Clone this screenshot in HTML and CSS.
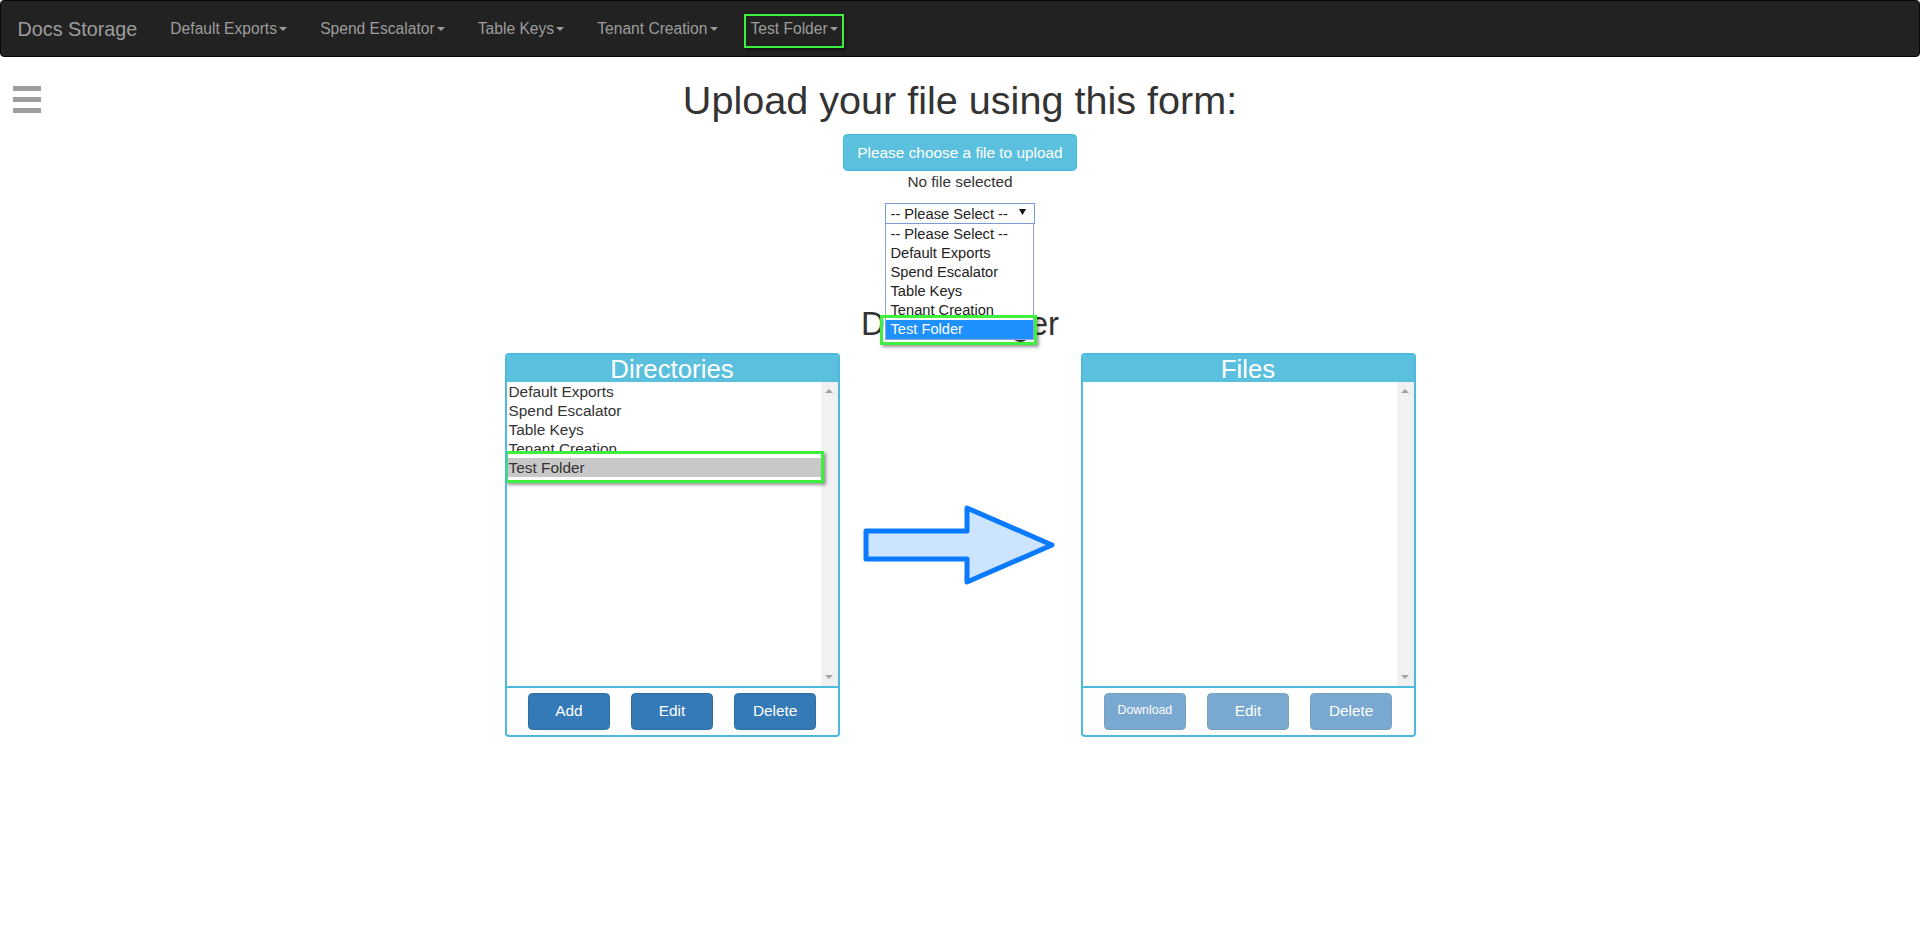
FILE: index.html
```html
<!DOCTYPE html>
<html lang="en">
<head>
<meta charset="utf-8">
<title>Docs Storage</title>
<link rel="stylesheet" href="styles.css">
</head>
<body>
<nav class="navbar">
  <a class="brand" href="#">Docs Storage</a>
  <ul class="nav">
    <li><a href="#">Default Exports<span class="caret"></span></a></li>
    <li><a href="#">Spend Escalator<span class="caret"></span></a></li>
    <li><a href="#">Table Keys<span class="caret"></span></a></li>
    <li><a href="#">Tenant Creation<span class="caret"></span></a></li>
    <li><a href="#"><span class="hl">Test Folder<span class="caret"></span></span></a></li>
  </ul>
</nav>

<main class="page">
  <button class="menu-toggle" type="button" aria-label="Menu"><span></span><span></span><span></span></button>

  <h1>Upload your file using this form:</h1>

  <form class="upload">
    <label class="btn-upload">Please choose a file to upload</label>
    <div class="file-name">No file selected</div>
    <div class="select-wrap">
      <div class="select">
        <span>-- Please Select --</span>
        <svg class="select-arrow" width="7" height="6" viewBox="0 0 7 6"><path d="M0 0H7L3.5 6Z" fill="#111"/></svg>
      </div>
      <ul class="dropdown">
        <li>-- Please Select --</li>
        <li>Default Exports</li>
        <li>Spend Escalator</li>
        <li>Table Keys</li>
        <li>Tenant Creation</li>
        <li class="active">Test Folder</li>
      </ul>
    </div>
  </form>

  <h2>Doc Manager</h2>

  <div class="manager">
    <section class="panel">
      <div class="panel-head">Directories</div>
      <div class="panel-body">
        <ul class="list">
          <li>Default Exports</li>
          <li>Spend Escalator</li>
          <li>Table Keys</li>
          <li>Tenant Creation</li>
          <li class="sel">Test Folder</li>
        </ul>
        <div class="scrollbar"><span class="up"></span><span class="down"></span></div>
      </div>
      <div class="panel-foot">
        <button class="btn" type="button">Add</button>
        <button class="btn" type="button">Edit</button>
        <button class="btn" type="button">Delete</button>
      </div>
    </section>

    <div class="arrow-col">
      <svg width="200" height="86" viewBox="0 0 200 86">
        <path d="M6 29 H107 V6 L192 43 L107 80 V57 H6 Z" fill="#cde4ff" stroke="#0a7bff" stroke-width="5" stroke-linejoin="round"/>
      </svg>
    </div>

    <section class="panel">
      <div class="panel-head">Files</div>
      <div class="panel-body">
        <ul class="list"></ul>
        <div class="scrollbar"><span class="up"></span><span class="down"></span></div>
      </div>
      <div class="panel-foot">
        <button class="btn disabled btn-small-text" type="button">Download</button>
        <button class="btn disabled" type="button">Edit</button>
        <button class="btn disabled" type="button">Delete</button>
      </div>
    </section>
  </div>
</main>
</body>
</html>
```

FILE: styles.css
```css
* {
  box-sizing: border-box;
}

html,
body {
  margin: 0;
  padding: 0;
}

body {
  font-family: "Liberation Sans", Arial, Helvetica, sans-serif;
  font-size: 15.4px;
  line-height: 22px;
  color: #333;
  background: #fff;
}

/* ---------- navbar ---------- */
.navbar {
  display: flex;
  height: 57px;
  background: #222;
  border: 1px solid #080808;
  border-radius: 4px;
}

.brand {
  display: block;
  padding: 16.5px;
  font-size: 19.8px;
  line-height: 22px;
  color: #9d9d9d;
  text-decoration: none;
}

.nav {
  display: flex;
  list-style: none;
  margin: 0;
  padding: 0;
}

.nav a {
  display: block;
  padding: 16.5px;
  font-size: 15.6px;
  line-height: 22px;
  color: #9d9d9d;
  text-decoration: none;
}

.caret {
  display: inline-block;
  width: 0;
  height: 0;
  margin-left: 2.2px;
  vertical-align: middle;
  border-top: 4.4px solid;
  border-left: 4.4px solid transparent;
  border-right: 4.4px solid transparent;
}

.hl {
  position: relative;
  display: inline-block;
}

.hl::after {
  content: "";
  position: absolute;
  left: -7px;
  right: -6px;
  top: -4px;
  bottom: -8px;
  border: 2.5px solid #3df03d;
  box-shadow: 2px 2px 3px rgba(0, 0, 0, 0.45);
}

/* ---------- page ---------- */
.page {
  position: relative;
  padding-top: 21.5px;
  text-align: center;
}

.menu-toggle {
  position: absolute;
  left: 13px;
  top: 29px;
  display: flex;
  flex-direction: column;
  gap: 6px;
  padding: 0;
  margin: 0;
  border: 0;
  background: transparent;
}

.menu-toggle span {
  display: block;
  width: 28px;
  height: 5px;
  background: #9e9e9e;
}

h1 {
  margin: 0 0 12px;
  font-size: 39.6px;
  line-height: 43.56px;
  font-weight: normal;
  color: #333;
}

.upload {
  display: flex;
  flex-direction: column;
  align-items: center;
  margin: 0;
}

.btn-upload {
  display: inline-block;
  padding: 6.6px 13.2px;
  font-size: 15.4px;
  line-height: 22px;
  color: #fff;
  background: #5bc0de;
  border: 1px solid #46b8da;
  border-radius: 4.4px;
}

.file-name {
  line-height: 22px;
}

.select-wrap {
  position: relative;
  z-index: 5;
  width: 150px;
  height: 21px;
  margin-top: 10px;
}

.select {
  display: flex;
  align-items: center;
  justify-content: space-between;
  height: 21px;
  padding: 1px 8px 0 4.5px;
  border: 1px solid #7a9bd6;
  font-size: 14.67px;
  line-height: 18px;
  color: #222;
  background: #fff;
}

.select-arrow {
  margin-top: -4px;
}

.dropdown {
  position: absolute;
  top: 21px;
  left: 0;
  width: 149px;
  margin: 0;
  padding: 1px 0 0;
  list-style: none;
  background: #fff;
  border: 1px solid #8aa5d9;
  border-top: 0;
  text-align: left;
}

.dropdown li {
  height: 19px;
  padding-left: 4.5px;
  font-size: 14.67px;
  line-height: 19px;
  color: #222;
  white-space: nowrap;
}

.dropdown li.active {
  position: relative;
  background: #1e90ff;
  color: #fff;
}

.dropdown li.active::after {
  content: "";
  position: absolute;
  left: -6px;
  right: -4px;
  top: -5px;
  bottom: -6px;
  border: 3px solid #3df03d;
  box-shadow: 2px 2px 3px rgba(0, 0, 0, 0.4);
}

h2 {
  margin: 81.4px 0 11px;
  font-size: 33px;
  line-height: 36.3px;
  font-weight: normal;
  color: #333;
}

/* ---------- manager ---------- */
.manager {
  display: flex;
  justify-content: center;
}

.panel {
  display: flex;
  flex-direction: column;
  width: 335px;
  height: 384px;
  border: 2px solid #4cbadc;
  border-radius: 4px;
  overflow: hidden;
  background: #fff;
}

.panel-head {
  height: 27px;
  padding-top: 1px;
  background: #5bc0de;
  color: #fff;
  font-size: 25.8px;
  line-height: 26px;
  text-align: center;
}

.panel-body {
  display: flex;
  flex: 1;
  min-height: 0;
}

.list {
  flex: 1;
  margin: 0;
  padding: 0;
  list-style: none;
  text-align: left;
}

.list li {
  height: 19px;
  padding-left: 2px;
  font-size: 15.4px;
  line-height: 19px;
  color: #333;
  white-space: nowrap;
}

.list li.sel {
  position: relative;
  background: #c8c8c8;
}

.list li.sel::after {
  content: "";
  position: absolute;
  left: -2px;
  right: -3px;
  top: -7px;
  bottom: -6px;
  border: 3px solid #3df03d;
  box-shadow: 2px 2px 3px rgba(0, 0, 0, 0.4);
}

.scrollbar {
  display: flex;
  flex-direction: column;
  justify-content: space-between;
  align-items: center;
  width: 17px;
  padding: 7.5px 0 6.5px;
  background: #f1f1f1;
}

.scrollbar .up,
.scrollbar .down {
  display: block;
  width: 0;
  height: 0;
  border-left: 4px solid transparent;
  border-right: 4px solid transparent;
}

.scrollbar .up {
  border-bottom: 4px solid #a3a3a3;
}

.scrollbar .down {
  border-top: 4px solid #a3a3a3;
}

.panel-foot {
  display: flex;
  justify-content: space-evenly;
  padding: 5px 0 5px;
  border-top: 2px solid #4cbadc;
}

.btn {
  width: 81.5px;
  height: 37.2px;
  padding: 0;
  font-family: inherit;
  font-size: 15.4px;
  line-height: 22px;
  color: #fff;
  background: #337ab7;
  border: 1px solid #2e6da4;
  border-radius: 4.4px;
}

.btn.disabled {
  opacity: 0.65;
}

.btn-small-text {
  font-size: 12.3px;
  padding-bottom: 3px;
}

.arrow-col {
  display: flex;
  align-items: center;
  justify-content: center;
  width: 241px;
}
```
